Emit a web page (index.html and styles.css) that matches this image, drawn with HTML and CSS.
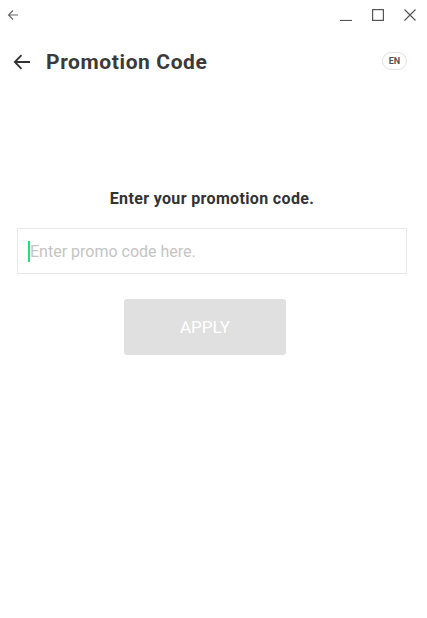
FILE: index.html
```html
<!DOCTYPE html>
<html lang="en">
<head>
<meta charset="utf-8">
<title>Promotion Code</title>
<link rel="stylesheet" href="styles.css">
</head>
<body>
<div class="window">
  <div class="titlebar">
    <svg class="tb-back" width="12" height="12" viewBox="0 0 12 12"><path d="M11 6H1.5M6 1.5L1.5 6L6 10.5" fill="none" stroke="#666" stroke-width="1.1"/></svg>
    <div class="controls">
      <svg width="12" height="12" viewBox="0 0 12 12"><path d="M0 11.5H12" stroke="#555" stroke-width="1.2"/></svg>
      <svg width="12" height="12" viewBox="0 0 12 12"><rect x="0.6" y="0.6" width="10.8" height="10.8" fill="none" stroke="#555" stroke-width="1.2"/></svg>
      <svg width="12" height="12" viewBox="0 0 12 12"><path d="M0.5 0.5L11.5 11.5M11.5 0.5L0.5 11.5" stroke="#555" stroke-width="1.2"/></svg>
    </div>
  </div>
  <header class="header">
    <svg class="back" width="20" height="20" viewBox="0 0 20 20"><path d="M18 10H2.8M9.5 3.2L2.8 10L9.5 16.8" fill="none" stroke="#333" stroke-width="1.8"/></svg>
    <h1 class="title">Promotion Code</h1>
    <span class="lang">EN</span>
  </header>
  <main class="content">
    <p class="prompt">Enter your promotion code.</p>
    <div class="field">
      <span class="caret"></span>
      <span class="placeholder">Enter promo code here.</span>
    </div>
    <button class="apply" type="button">APPLY</button>
  </main>
</div>
</body>
</html>
```
FILE: styles.css
```css
html, body {
  margin: 0;
  padding: 0;
  background: #fff;
}
body {
  font-family: Roboto, "Liberation Sans", sans-serif;
  color: #333;
}
.window {
  width: 427px;
  height: 618px;
}
.titlebar {
  height: 30px;
  display: flex;
  align-items: flex-start;
  justify-content: space-between;
  padding: 9px 11px 0 7px;
  box-sizing: border-box;
}
.tb-back { display: block; }
.controls {
  display: flex;
  gap: 20px;
}
.controls svg { display: block; }
.header {
  height: 36px;
  margin-top: 14px;
  display: flex;
  align-items: center;
  padding: 0 20px 0 12px;
}
.back { display: block; flex: none; }
.title {
  margin: 0 0 0 14px;
  font-size: 21px;
  letter-spacing: 0.6px;
  font-weight: 700;
  color: #3a3a3a;
  flex: 1;
  line-height: 36px;
}
.lang {
  width: 25px;
  height: 18px;
  box-sizing: border-box;
  border: 1px solid #e2e2e2;
  border-radius: 9px;
  font-size: 9px;
  font-weight: 700;
  color: #555;
  display: flex;
  align-items: center;
  justify-content: center;
  margin-top: -2px;
}
.content {
  display: flex;
  flex-direction: column;
  align-items: center;
  padding: 109px 20px 0 17px;
}
.prompt {
  margin: 0;
  font-size: 16px;
  letter-spacing: 0.35px;
  line-height: 20px;
  font-weight: 700;
  color: #333;
}
.field {
  margin-top: 19px;
  align-self: stretch;
  height: 46px;
  box-sizing: border-box;
  border: 1px solid #e8e8e8;
  display: flex;
  align-items: center;
  padding-left: 10px;
}
.caret {
  width: 2px;
  height: 21px;
  background: #1ee07a;
  margin-top: 1px;
}
.placeholder {
  font-size: 16px;
  color: #c4c4c4;
}
.apply {
  margin: 25px 14px 0 0;
  width: 162px;
  height: 56px;
  border: none;
  border-radius: 3px;
  background: #e0e0e0;
  color: #fff;
  font-family: Roboto, "Liberation Sans", sans-serif;
  font-size: 17px;
  padding: 0;
}
```
